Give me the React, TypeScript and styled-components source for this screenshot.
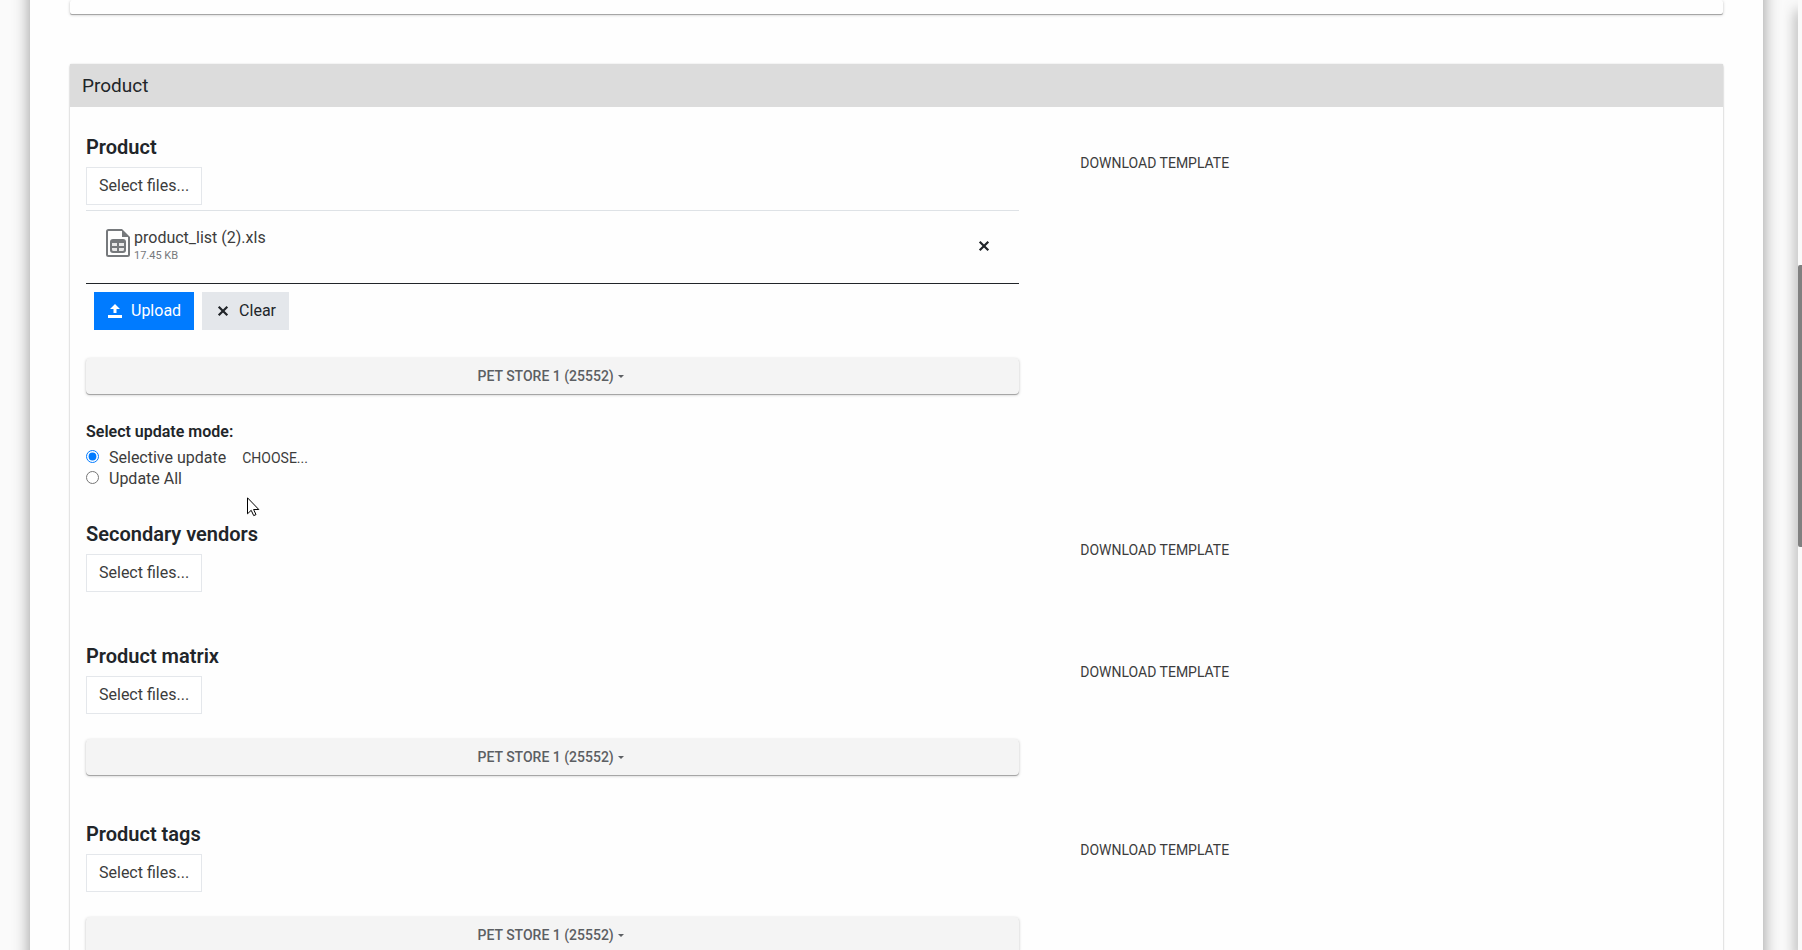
import React from 'react';
import styled, { createGlobalStyle } from 'styled-components';

const GlobalStyle = createGlobalStyle`
  *, *::before, *::after { box-sizing: border-box; }
  body {
    margin: 0;
    background: #fafafa;
    color: #212529;
    font-family: Roboto, "Liberation Sans", sans-serif;
    font-size: 16px;
    line-height: 24px;
  }
  button { font-family: inherit; cursor: pointer; }
`;

const Viewport = styled.div`
  display: flex;
  position: relative;
  height: 100vh;
  overflow: hidden;
`;

const Page = styled.main`
  flex: 1;
  min-width: 0;
  padding: 0 35px 0 30px;
`;

const Sheet = styled.div`
  margin-top: -40px;
  padding: 40px 40px 60px;
  background: #fefefe;
  box-shadow: 0 0 16px rgba(0, 0, 0, 0.4);
`;

const Card = styled.section`
  background: #fefefe;
  border-radius: 2px;
  box-shadow: 0 1px 2px rgba(0, 0, 0, 0.3), 0 0 2px rgba(0, 0, 0, 0.1);
`;

const PreviousCard = styled(Card)`
  height: 14px;
  margin-bottom: 50px;
  box-shadow: 0 1px 0 #a6a6a6, 0 1px 3px rgba(0, 0, 0, 0.25);
`;

const CardTitle = styled.h2`
  margin: 0;
  padding: 10px 12px 9px;
  background: #dcdcdc;
  font-size: 19px;
  font-weight: 400;
  line-height: 24px;
`;

const CardBody = styled.div`
  padding-top: 28px;
`;

const ImportRow = styled.div<{ $gap: number }>`
  display: grid;
  grid-template-columns: 7fr 5fr;
  margin-bottom: ${(p) => p.$gap}px;
`;

const Column = styled.div`
  min-width: 0;
  padding: 0 15px 0 16px;
`;

const Heading = styled.h3`
  margin: 0 0 8px;
  font-size: 20px;
  font-weight: 600;
  line-height: 24px;
`;

const BaseButton = styled.button`
  display: inline-flex;
  align-items: center;
  gap: 8px;
  height: 38px;
  padding: 0 12px;
  border: 1px solid transparent;
  font-size: 16px;
  line-height: 24px;
  color: #212529;
`;

const SelectButton = styled(BaseButton)`
  display: flex;
  background: #ffffff;
  border-color: #e4e7eb;
  color: #3c3c3c;
`;

const UploadButton = styled(BaseButton)`
  background: #007bff;
  color: #ffffff;
`;

const ClearButton = styled(BaseButton)`
  background: #e4e7eb;
`;

const FileList = styled.ul`
  margin: 5px 0 0;
  padding: 0;
  list-style: none;
  border-top: 1px solid #dee2e6;
`;

const FileItem = styled.li`
  display: flex;
  align-items: center;
  height: 73px;
  padding: 18px 20px 20px;
  border-bottom: 1px solid #212529;

  > svg { align-self: flex-start; }
`;

const FileText = styled.div`
  flex: 1;
  display: flex;
  flex-direction: column;
  margin-left: 4px;
`;

const FileName = styled.span`
  line-height: 20px;
  color: #3c3c3c;
`;

const FileSize = styled.span`
  font-size: 11px;
  line-height: 16px;
  color: #76797c;
`;

const RemoveButton = styled.button`
  display: flex;
  padding: 7px;
  border: 0;
  background: none;
  color: #212529;
`;

const Actions = styled.div`
  display: flex;
  gap: 8px;
  padding: 8px 8px 3px;
`;

const StoreButton = styled.button`
  display: flex;
  align-items: center;
  justify-content: center;
  gap: 4px;
  width: 100%;
  height: 36px;
  margin-top: 25px;
  padding: 0 4px 0 0;
  border: 0;
  border-radius: 4px;
  background: #f4f4f4;
  box-shadow: 0 1px 0 #a6a6a6, 0 1px 3px rgba(0, 0, 0, 0.25);
  color: #5c5f63;
  font-size: 14px;
  font-weight: 500;
`;

const Caret = styled.span`
  border: 3px solid transparent;
  border-top-color: currentColor;
  border-bottom: 0;
`;

const ModeGroup = styled.fieldset`
  margin: 26px 0 0;
  padding: 0;
  border: 0;
`;

const ModeTitle = styled.legend`
  padding: 0;
  margin-bottom: 3px;
  font-weight: 600;
  line-height: 24px;
`;

const ModeRow = styled.div`
  display: flex;
  align-items: center;
  height: 21px;
  color: #3c3c3c;
`;

const Radio = styled.input`
  width: 13px;
  height: 13px;
  margin: 0 10px 2px 0;
  accent-color: #007bff;
`;

const TextButton = styled.button`
  padding: 0;
  border: 0;
  background: none;
  color: #3c3c3c;
  font-size: 14px;
  line-height: 24px;
`;

const ChooseButton = styled(TextButton)`
  margin-left: 16px;
`;

const TemplateButton = styled(TextButton)`
  margin: 16px 0 0 30px;
`;

const ScrollRail = styled.div`
  flex: none;
  width: 4px;
  padding-top: 265px;
  background: #fafafa;
  box-shadow: 0 10px 14px rgba(0, 0, 0, 0.7);
`;

const ScrollThumb = styled.div`
  height: 282px;
  border-radius: 2px 0 0 2px;
  background: #808080;
`;

const Pointer = styled.svg`
  position: absolute;
  left: 247px;
  top: 497px;
`;

const Cross = () => (
  <svg width="16" height="16" viewBox="0 0 16 16" fill="none" stroke="currentColor" strokeWidth="2.2" aria-hidden="true">
    <path d="M3.700 3.700l8.600 8.600M12.300 3.700l-8.600 8.600" />
  </svg>
);

const UploadIcon = () => (
  <svg width="16" height="16" viewBox="0 0 16 16" fill="currentColor" aria-hidden="true">
    <path d="M1 12h14v3H1zM8 1l5 5H9.500v4h-3V6H3z" />
  </svg>
);

const SheetIcon = () => (
  <svg width="24" height="28" viewBox="0 0 24 28" aria-hidden="true">
    <path d="M16 1H2.500Q1 1 1 2.500v23Q1 27 2.500 27h19q1.500 0 1.500-1.500V8" fill="none" stroke="#76797c" strokeWidth="2" />
    <path d="M16 0l8 8h-8z" fill="#76797c" />
    <path d="M7 10h10q3 0 3 3v8q0 3-3 3H7q-3 0-3-3v-8q0-3 3-3z" fill="#76797c" />
    <path d="M6 14h5v3H6zM13 14h5v3h-5zM6 19h5v3H7.500Q6 22 6 20.500zM13 19h5v1.500q0 1.500-1.500 1.500H13z" fill="#e8e8e8" />
  </svg>
);

const StorePicker = () => (
  <StoreButton type="button">
    PET STORE 1 (25552)
    <Caret />
  </StoreButton>
);

interface ImportSectionProps {
  title: string;
  gap: number;
  children?: React.ReactNode;
}

const ImportSection = ({ title, gap, children }: ImportSectionProps) => (
  <ImportRow $gap={gap}>
    <Column>
      <Heading>{title}</Heading>
      <SelectButton type="button">Select files...</SelectButton>
      {children}
    </Column>
    <Column>
      <TemplateButton type="button">DOWNLOAD TEMPLATE</TemplateButton>
    </Column>
  </ImportRow>
);

export default function App() {
  return (
    <>
      <GlobalStyle />
      <Viewport>
        <Page>
          <Sheet>
            <PreviousCard />
            <Card>
              <CardTitle>Product</CardTitle>
              <CardBody>
                <ImportSection title="Product" gap={33}>
                  <FileList>
                    <FileItem>
                      <SheetIcon />
                      <FileText>
                        <FileName>product_list (2).xls</FileName>
                        <FileSize>17.45 KB</FileSize>
                      </FileText>
                      <RemoveButton type="button" aria-label="Remove file">
                        <Cross />
                      </RemoveButton>
                    </FileItem>
                  </FileList>
                  <Actions>
                    <UploadButton type="button">
                      <UploadIcon />
                      Upload
                    </UploadButton>
                    <ClearButton type="button">
                      <Cross />
                      Clear
                    </ClearButton>
                  </Actions>
                  <StorePicker />
                  <ModeGroup>
                    <ModeTitle>Select update mode:</ModeTitle>
                    <ModeRow>
                      <Radio type="radio" id="mode-selective" name="mode" defaultChecked />
                      <label htmlFor="mode-selective">Selective update</label>
                      <ChooseButton type="button">CHOOSE...</ChooseButton>
                    </ModeRow>
                    <ModeRow>
                      <Radio type="radio" id="mode-all" name="mode" />
                      <label htmlFor="mode-all">Update All</label>
                    </ModeRow>
                  </ModeGroup>
                </ImportSection>
                <ImportSection title="Secondary vendors" gap={52} />
                <ImportSection title="Product matrix" gap={47}>
                  <StorePicker />
                </ImportSection>
                <ImportSection title="Product tags" gap={47}>
                  <StorePicker />
                </ImportSection>
              </CardBody>
            </Card>
          </Sheet>
        </Page>
        <ScrollRail>
          <ScrollThumb />
        </ScrollRail>
        <Pointer width="13" height="20" viewBox="0 0 13 20" aria-hidden="true">
          <path d="M.5.800v16l3.700-3.500 2.500 5.300 2.300-1-2.400-5.100h5.200z" fill="#fff" stroke="#000" />
        </Pointer>
      </Viewport>
    </>
  );
}
